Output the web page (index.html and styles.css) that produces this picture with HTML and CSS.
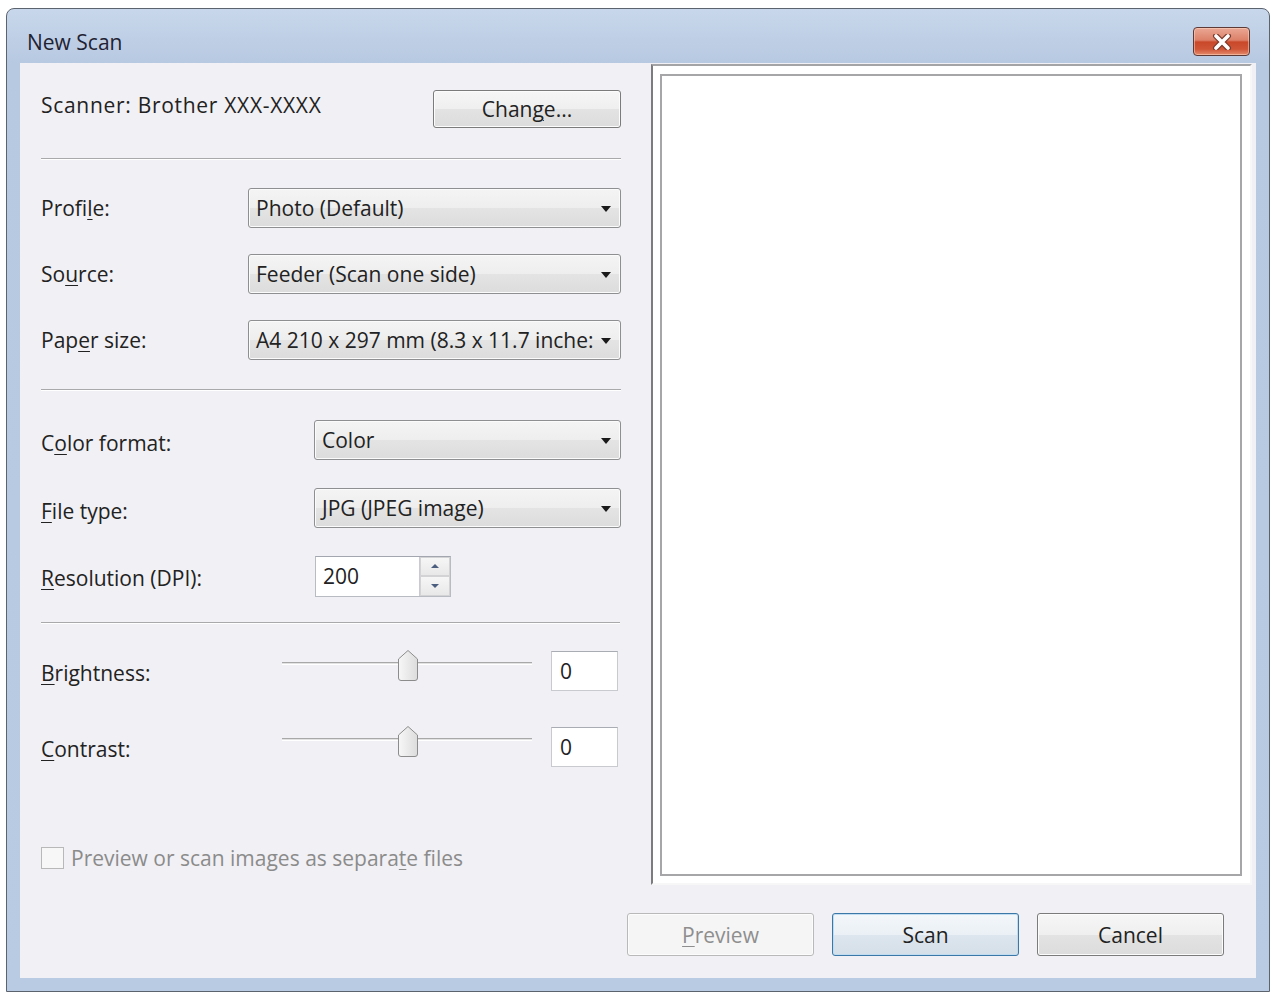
FILE: index.html
```html
<!DOCTYPE html>
<html lang="en">
<head>
    <meta charset="UTF-8">
    <title>New Scan</title>
    <link rel="stylesheet" href="styles.css">
</head>
<body>
    <div class="window">
        <div class="titlebar">
            <span class="title">New Scan</span>
            <button class="close-btn" title="Close">
                <svg width="22" height="16" viewBox="0 0 22 16">
                    <path d="M5 2 L17 14 M17 2 L5 14" stroke="#7b3b2c" stroke-width="6" stroke-linecap="round"/>
                    <path d="M5 2 L17 14 M17 2 L5 14" stroke="#ffffff" stroke-width="3.6" stroke-linecap="round"/>
                </svg>
            </button>
        </div>

        <div class="client">
            <!-- scan settings -->
            <div class="settings">
                <div class="row scanner-row">
                    <span class="scanner-name">Scanner: Brother XXX-XXXX</span>
                    <button class="btn btn-change">Chan<u>g</u>e...</button>
                </div>

                <div class="sep sep-top"></div>

                <div class="group group-paper">
                    <div class="row">
                        <span class="label label-short">Profi<u>l</u>e:</span>
                        <div class="combo">Photo (Default)<span class="arrow"></span></div>
                    </div>
                    <div class="row">
                        <span class="label label-short">So<u>u</u>rce:</span>
                        <div class="combo">Feeder (Scan one side)<span class="arrow"></span></div>
                    </div>
                    <div class="row">
                        <span class="label label-short">Pap<u>e</u>r size:</span>
                        <div class="combo">A4 210 x 297 mm (8.3 x 11.7 inche:<span class="arrow"></span></div>
                    </div>
                </div>

                <div class="sep sep-mid"></div>

                <div class="group group-format">
                    <div class="row">
                        <span class="label label-long">C<u>o</u>lor format:</span>
                        <div class="combo">Color<span class="arrow"></span></div>
                    </div>
                    <div class="row">
                        <span class="label label-long"><u>F</u>ile type:</span>
                        <div class="combo">JPG (JPEG image)<span class="arrow"></span></div>
                    </div>
                    <div class="row">
                        <span class="label label-long"><u>R</u>esolution (DPI):</span>
                        <div class="spinner">
                            <div class="spin-value">200</div>
                            <div class="spin-buttons">
                                <span class="spin-btn"><span class="tri-up"></span></span>
                                <span class="spin-btn"><span class="tri-down"></span></span>
                            </div>
                        </div>
                    </div>
                </div>

                <div class="sep sep-low"></div>

                <div class="group group-adjust">
                    <div class="row row-slider">
                        <span class="label label-slider"><u>B</u>rightness:</span>
                        <div class="slider">
                            <div class="track"></div>
                            <svg class="thumb" width="22" height="33" viewBox="0 0 22 33">
                                <defs>
                                    <linearGradient id="tg1" x1="0" y1="0" x2="1" y2="0">
                                        <stop offset="0" stop-color="#f7f7f7"/>
                                        <stop offset="1" stop-color="#dcdcdc"/>
                                    </linearGradient>
                                </defs>
                                <path d="M1.5 10 L11 1.5 L20.5 10 V29 Q20.5 31.5 18 31.5 H4 Q1.5 31.5 1.5 29 Z" fill="url(#tg1)" stroke="#8c8c8c"/>
                            </svg>
                        </div>
                        <div class="value-box">0</div>
                    </div>
                    <div class="row row-slider">
                        <span class="label label-slider"><u>C</u>ontrast:</span>
                        <div class="slider">
                            <div class="track"></div>
                            <svg class="thumb" width="22" height="33" viewBox="0 0 22 33">
                                <defs>
                                    <linearGradient id="tg2" x1="0" y1="0" x2="1" y2="0">
                                        <stop offset="0" stop-color="#f7f7f7"/>
                                        <stop offset="1" stop-color="#dcdcdc"/>
                                    </linearGradient>
                                </defs>
                                <path d="M1.5 10 L11 1.5 L20.5 10 V29 Q20.5 31.5 18 31.5 H4 Q1.5 31.5 1.5 29 Z" fill="url(#tg2)" stroke="#8c8c8c"/>
                            </svg>
                        </div>
                        <div class="value-box">0</div>
                    </div>
                </div>

                <div class="row check-row">
                    <span class="checkbox"></span>
                    <span>Preview or scan images as separa<u>t</u>e files</span>
                </div>
            </div>

            <!-- preview area -->
            <div class="preview-pane">
                <div class="preview-page"></div>
            </div>

            <!-- dialog buttons -->
            <div class="actions">
                <button class="btn btn-disabled" disabled><u>P</u>review</button>
                <button class="btn btn-default">Scan</button>
                <button class="btn">Cancel</button>
            </div>
        </div>
    </div>
</body>
</html>
```

FILE: styles.css
```css
* {
    box-sizing: border-box;
}
body {
    margin: 0;
    background: #ffffff;
    font-family: "Open Sans", "Noto Sans", sans-serif;
    font-size: 21px;
    color: #222222;
}
u {
    text-underline-offset: 3px;
    text-decoration-thickness: 1px;
}

/* window frame */
.window {
    margin: 8px 0 0 6px;
    width: 1264px;
    height: 984px;
    border: 1px solid #5b636e;
    border-radius: 8px 8px 0 0;
    background: linear-gradient(#c8d7eb, #b7c9e1 54px, #b9cbe3);
    padding: 0 13px 13px;
    display: flex;
    flex-direction: column;
}
.titlebar {
    height: 54px;
    display: flex;
    justify-content: space-between;
    align-items: flex-end;
    padding: 0 6px 7px 7px;
}
.title {
    align-self: center;
    margin-top: 18px;
    color: #1f2233;
}
.close-btn {
    width: 57px;
    height: 29px;
    padding: 0;
    border: 1px solid #5e3a36;
    border-radius: 4px;
    background: linear-gradient(#eaa895, #dc8068 45%, #c9482a 52%, #cf5536 78%, #e58b6d);
    box-shadow: inset 0 0 0 1px rgba(255, 220, 200, 0.5);
    display: flex;
    align-items: center;
    justify-content: center;
}

/* client area */
.client {
    flex: 1;
    background: #f1f0f4;
    display: grid;
    grid-template-columns: 631px 605px;
    grid-template-rows: auto 1fr;
}
.settings {
    padding: 27px 30px 0 21px;
}
.row {
    display: flex;
    align-items: center;
}
.scanner-row {
    height: 38px;
    justify-content: space-between;
}
.scanner-name {
    margin-bottom: 8px;
    letter-spacing: 0.7px;
}
.sep {
    height: 2px;
    border-top: 1px solid #a9a9ab;
    border-bottom: 1px solid #ffffff;
}
.sep-top {
    margin: 30px 0 28px;
}
.sep-mid {
    margin: 29px 0 29px;
}
.sep-low {
    margin: 26px 1px 27px 0;
}
.group {
    display: flex;
    flex-direction: column;
}
.group .row {
    height: 40px;
}
.group-paper {
    gap: 26px;
}
.group-format {
    gap: 28px;
}
.group-format .label {
    padding-top: 6px;
}
.group-format .row:last-child .label {
    padding-top: 3px;
}
.group-adjust {
    gap: 36px;
}
.label-short {
    width: 207px;
}
.label-long {
    width: 273px;
}
.label-slider {
    width: 241px;
    padding-top: 4px;
}

/* combo boxes */
.combo {
    flex: 1;
    height: 40px;
    position: relative;
    display: flex;
    align-items: center;
    padding-left: 7px;
    border: 1px solid #8e8f91;
    border-radius: 3px;
    background: linear-gradient(#f4f4f4, #eeeeee 50%, #e4e4e4 50%, #dcdcdc);
    box-shadow: inset 0 0 0 1px #fbfbfb;
    white-space: nowrap;
    overflow: hidden;
}
.arrow {
    position: absolute;
    right: 9px;
    top: 17px;
    width: 0;
    height: 0;
    border-left: 5px solid transparent;
    border-right: 5px solid transparent;
    border-top: 6px solid #1a1a1a;
}

/* spinner */
.spinner {
    width: 136px;
    height: 41px;
    margin-left: 1px;
    display: flex;
    border: 1px solid #b9bbc2;
    border-top-color: #a3a6ae;
    background: #ffffff;
}
.spin-value {
    flex: 1;
    padding-left: 7px;
    display: flex;
    align-items: center;
}
.spin-buttons {
    width: 31px;
    display: flex;
    flex-direction: column;
    border-left: 1px solid #c9cbd1;
}
.spin-btn {
    flex: 1;
    display: flex;
    align-items: center;
    justify-content: center;
    background: linear-gradient(#f6f6f6, #e8e8e8);
    border: 1px solid #d3d3d6;
}
.tri-up,
.tri-down {
    width: 0;
    height: 0;
    border-left: 4px solid transparent;
    border-right: 4px solid transparent;
}
.tri-up {
    border-bottom: 4px solid #4c5e80;
}
.tri-down {
    border-top: 4px solid #4c5e80;
}

/* sliders */
.row-slider {
    align-items: flex-start;
}
.row-slider .label {
    align-self: center;
}
.slider {
    width: 250px;
    height: 40px;
    position: relative;
}
.track {
    margin-top: 11px;
    height: 3px;
    border-top: 1px solid #a8a8a8;
    border-bottom: 1px solid #ffffff;
    background: #e2e2e2;
}
.thumb {
    position: absolute;
    left: 115px;
    top: -2px;
}
.value-box {
    width: 67px;
    height: 40px;
    margin-left: 19px;
    padding-left: 8px;
    display: flex;
    align-items: center;
    background: #ffffff;
    border: 1px solid #c8cad0;
    border-top-color: #a9acb3;
}

/* checkbox */
.check-row {
    margin-top: 80px;
    height: 22px;
    gap: 7px;
    color: #8b8b8b;
}
.checkbox {
    width: 23px;
    height: 22px;
    border: 1px solid #b8b8b8;
    background: #f7f7f7;
}

/* preview */
.preview-pane {
    margin-top: 1px;
    width: 601px;
    height: 821px;
    padding: 8px 8px 7px 7px;
    background: #ffffff;
    border: 2px solid #f7f7f7;
    border-top-color: #a4a4a6;
    border-left-color: #7c7c7e;
}
.preview-page {
    height: 100%;
    background: #ffffff;
    border: 2px solid #a6a6a8;
}

/* buttons */
.actions {
    grid-column: 1 / -1;
    display: flex;
    justify-content: flex-end;
    align-items: flex-start;
    gap: 18px;
    padding: 28px 32px 0 0;
}
.btn {
    width: 187px;
    height: 43px;
    padding: 0;
    font: inherit;
    color: #222222;
    border: 1px solid #7b7b7b;
    border-radius: 3px;
    background: linear-gradient(#f6f6f6, #efefef 50%, #e3e3e3 50%, #dcdcdc);
    box-shadow: inset 0 0 0 1px #fcfcfc;
}
.btn-change {
    width: 188px;
    height: 38px;
}
.btn-default {
    border-color: #3b78a8;
    background: linear-gradient(#f3f7fa, #eaf0f5 50%, #dde6ee 50%, #d5dfe8);
    box-shadow: inset 0 0 0 1px #bfdcf1;
}
.btn-disabled {
    color: #8e8e8e;
    border-color: #b9b9b9;
    background: #f5f5f5;
}
```
